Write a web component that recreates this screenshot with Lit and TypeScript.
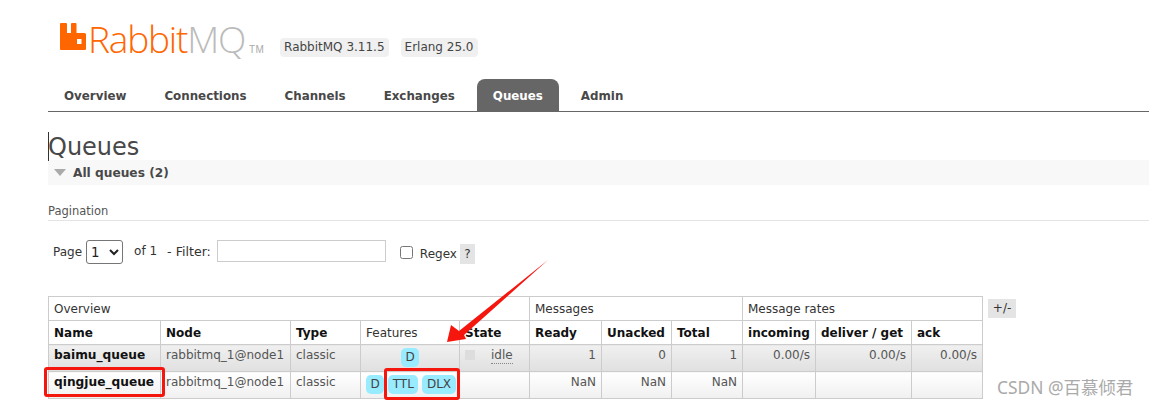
import { LitElement, html, css, svg } from "lit";
import { customElement } from "lit/decorators.js";

const cols = [112, 130, 70, 99, 70, 72, 70, 71, 73, 96, 71];

@customElement("app-root")
export class AppRoot extends LitElement {
  static styles = css`
    :host { display: block; position: relative; width: 1149px; height: 405px; overflow: hidden; background: #fff;
      font-family: "DejaVu Sans", Verdana, sans-serif; font-size: 12px; color: #484848; }
    .page { padding-left: 48px; display: flex; flex-direction: column; }
    .header { height: 79px; display: flex; align-items: flex-start; padding-top: 22px; box-sizing: border-box; }
    .logo { display: flex; align-items: baseline; margin-left: 12px; height: 34px; }
    .logo svg { align-self: flex-start; margin-top: 1px; margin-right: 2px; }
    .word { font-family: "Open Sans", sans-serif; font-weight: 300; font-size: 37px; line-height: 34px; letter-spacing: -1.2px; color: #f60; }
    .word span { color: #bbb; }
    .tm { font-family: "Liberation Sans", sans-serif; font-size: 10px; color: #aaa; margin-left: 4px; letter-spacing: .3px; }
    .versions { display: flex; gap: 12px; margin-left: 16px; margin-top: 16px; }
    .ver { background: #f0f0f0; border-radius: 4px; padding: 0 4px; height: 19px; line-height: 19px; font-size: 12px; color: #444; }
    .tabs { display: flex; gap: 6px; height: 32px; border-bottom: 1px solid #666; }
    .tab { padding: 0 16px; font-weight: bold; font-size: 11.85px; line-height: 35px; color: #484848; border-radius: 8px 8px 0 0; }
    .tab.on { background: #666; color: #fff; }
    h1 { position: relative; margin: 18px 0 0; font-weight: normal; font-size: 24px; line-height: 34px; height: 30px; color: #484848; }
    h1::before { content: ""; position: absolute; left: 0; top: 2px; width: 1px; height: 29px; background: #333; }
    .section { height: 25px; background: #f8f8f8; display: flex; align-items: center; gap: 7px; padding-left: 6px; font-weight: bold; font-size: 12.2px; }
    .tri { width: 0; height: 0; border: 6px solid transparent; border-top: 7px solid #aaa; border-bottom: 0; }
    .pag { margin-top: 19px; height: 16px; line-height: 14px; padding-bottom: 0; border-bottom: 1px solid #e4e4e4; font-size: 11.5px; color: #555; }
    .filter { display: flex; align-items: center; height: 26px; margin-top: 18px; padding-left: 5px; color: #333; }
    .filter > * { flex: none; }
    select { width: 37px; height: 24px; margin: 0 11px 0 4px; font: 13.3px "DejaVu Sans", sans-serif; background: #fff; border: 1px solid #767676; border-radius: 3px; color: #222; }
    .txt { width: 169px; height: 22px; box-sizing: border-box; border: 1px solid #ccc; margin: 0 14px 2px 6px; }
    .of { margin-right: 10px; position: relative; top: -1px; }
    .lab { position: relative; top: -1px; font-size: 12.6px; }
    input[type="checkbox"] { width: 13px; height: 13px; margin: 0 7px 0 0; }
    .rgx { position: relative; top: 2px; }
    .help { background: #e4e4e4; width: 15px; height: 20px; line-height: 20px; text-align: center; margin-left: 3px; position: relative; top: 2px; }
    .tablewrap { display: flex; gap: 5px; margin-top: 31px; align-items: flex-start; }
    table { border-collapse: collapse; table-layout: fixed; width: 935px; font-size: 12px; }
    th, td { border: 1px solid #ccc; padding: 0 5px; overflow: hidden; white-space: nowrap; }
    thead tr:first-child th { height: 23px; font-weight: normal; text-align: left; color: #333; }
    thead tr:nth-child(2) th { height: 23px; font-weight: bold; text-align: left; color: #111; }
    th.plain { font-weight: normal !important; color: #333 !important; }
    td { height: 27px; vertical-align: top; padding-top: 3px; padding-bottom: 0; box-sizing: border-box; color: #555; }
    td.n { text-align: right; }
    td.name { font-weight: bold; font-size: 12.2px; color: #111; }
    tr.a td { background: linear-gradient(#f0f0f0, #e0e0e0); }
    tr.b td { background: linear-gradient(#fff, #f0f0f0); }
    td.f { text-align: center; padding: 3px 0 0 0; color: #444; }
    td.f.left { text-align: left; padding-left: 5px; }
    .badge { display: inline-block; background: #99ebff; border-radius: 5px; padding: 0 4.500px; height: 19px; line-height: 19px; margin-right: 4px; color: #444; }
    .badge.only { margin-right: 0; }
    .st { display: flex; align-items: flex-start; padding-left: 0; }
    .sq { width: 10px; height: 10px; background: #ddd; margin: 2px 16px 0 0; }
    .idle { border-bottom: 1px dotted #888; line-height: 15px; }
    .pm { background: #e4e4e4; width: 28px; height: 19px; line-height: 19px; text-align: center; margin-top: 3px; color: #333; }
    .mark { position: absolute; box-sizing: border-box; border: 3px solid #f5160e; border-radius: 3px; }
    .m1 { left: 44px; top: 367px; width: 121px; height: 30px; }
    .m2 { left: 384px; top: 368px; width: 76px; height: 32px; }
    .arrow { position: absolute; left: 0; top: 0; }
    .wm { position: absolute; left: 997px; top: 377px; font-family: "Noto Sans", "Noto Sans CJK SC", sans-serif; font-size: 17.4px; line-height: 20px; color: #aaa; white-space: nowrap; }
  `;

  render() {
    return html`
      <div class="page">
        <div class="header">
          <div class="logo">
            <svg width="26" height="27" viewBox="0 0 26 27">
              <path fill="#f60" fill-rule="evenodd" d="M1 0h5a1 1 0 0 1 1 1v9h4V1a1 1 0 0 1 1-1h3.500a1 1 0 0 1 1 1v9h8a1.500 1.500 0 0 1 1.500 1.500V26a1 1 0 0 1-1 1H1a1 1 0 0 1-1-1V1a1 1 0 0 1 1-1zM17 16v5h4.500v-5z"/>
            </svg>
            <div class="word">Rabbit<span>MQ</span></div><div class="tm">TM</div>
          </div>
          <div class="versions"><div class="ver">RabbitMQ 3.11.5</div><div class="ver">Erlang 25.0</div></div>
        </div>
        <div class="tabs">
          ${["Overview", "Connections", "Channels", "Exchanges", "Queues", "Admin"].map(
            (t) => html`<div class="tab ${t === "Queues" ? "on" : ""}">${t}</div>`
          )}
        </div>
        <h1>Queues</h1>
        <div class="section"><span class="tri"></span>All queues (2)</div>
        <div class="pag">Pagination</div>
        <div class="filter">
          <span>Page</span>
          <select><option>1</option></select>
          <span class="of">of 1</span>
          <span class="lab">- Filter:</span>
          <input class="txt" type="text" />
          <input type="checkbox" />
          <span class="rgx">Regex</span>
          <span class="help">?</span>
        </div>
        <div class="tablewrap">
          <table>
            <colgroup>${cols.map((w) => html`<col style="width:${w}px" />`)}</colgroup>
            <thead>
              <tr><th colspan="5">Overview</th><th colspan="3">Messages</th><th colspan="3">Message rates</th></tr>
              <tr>
                <th>Name</th><th>Node</th><th>Type</th><th class="plain">Features</th><th>State</th>
                <th>Ready</th><th>Unacked</th><th>Total</th><th>incoming</th><th>deliver / get</th><th>ack</th>
              </tr>
            </thead>
            <tbody>
              <tr class="a">
                <td class="name">baimu_queue</td><td>rabbitmq_1@node1</td><td>classic</td>
                <td class="f"><span class="badge only">D</span></td>
                <td><div class="st"><span class="sq"></span><span class="idle">idle</span></div></td>
                <td class="n">1</td><td class="n">0</td><td class="n">1</td>
                <td class="n">0.00/s</td><td class="n">0.00/s</td><td class="n">0.00/s</td>
              </tr>
              <tr class="b">
                <td class="name">qingjue_queue</td><td>rabbitmq_1@node1</td><td>classic</td>
                <td class="f left"><span class="badge">D</span><span class="badge">TTL</span><span class="badge only">DLX</span></td>
                <td></td>
                <td class="n">NaN</td><td class="n">NaN</td><td class="n">NaN</td>
                <td></td><td></td><td></td>
              </tr>
            </tbody>
          </table>
          <div class="pm">+/-</div>
        </div>
      </div>
      <div class="mark m1"></div>
      <div class="mark m2"></div>
      <svg class="arrow" width="1149" height="405" viewBox="0 0 1149 405">
        ${svg`<polygon fill="#f5160e" points="447,342 451,325 459,331 548,260 464,335 466,339" />`}
      </svg>
      <div class="wm">CSDN @百慕倾君</div>
    `;
  }
}
